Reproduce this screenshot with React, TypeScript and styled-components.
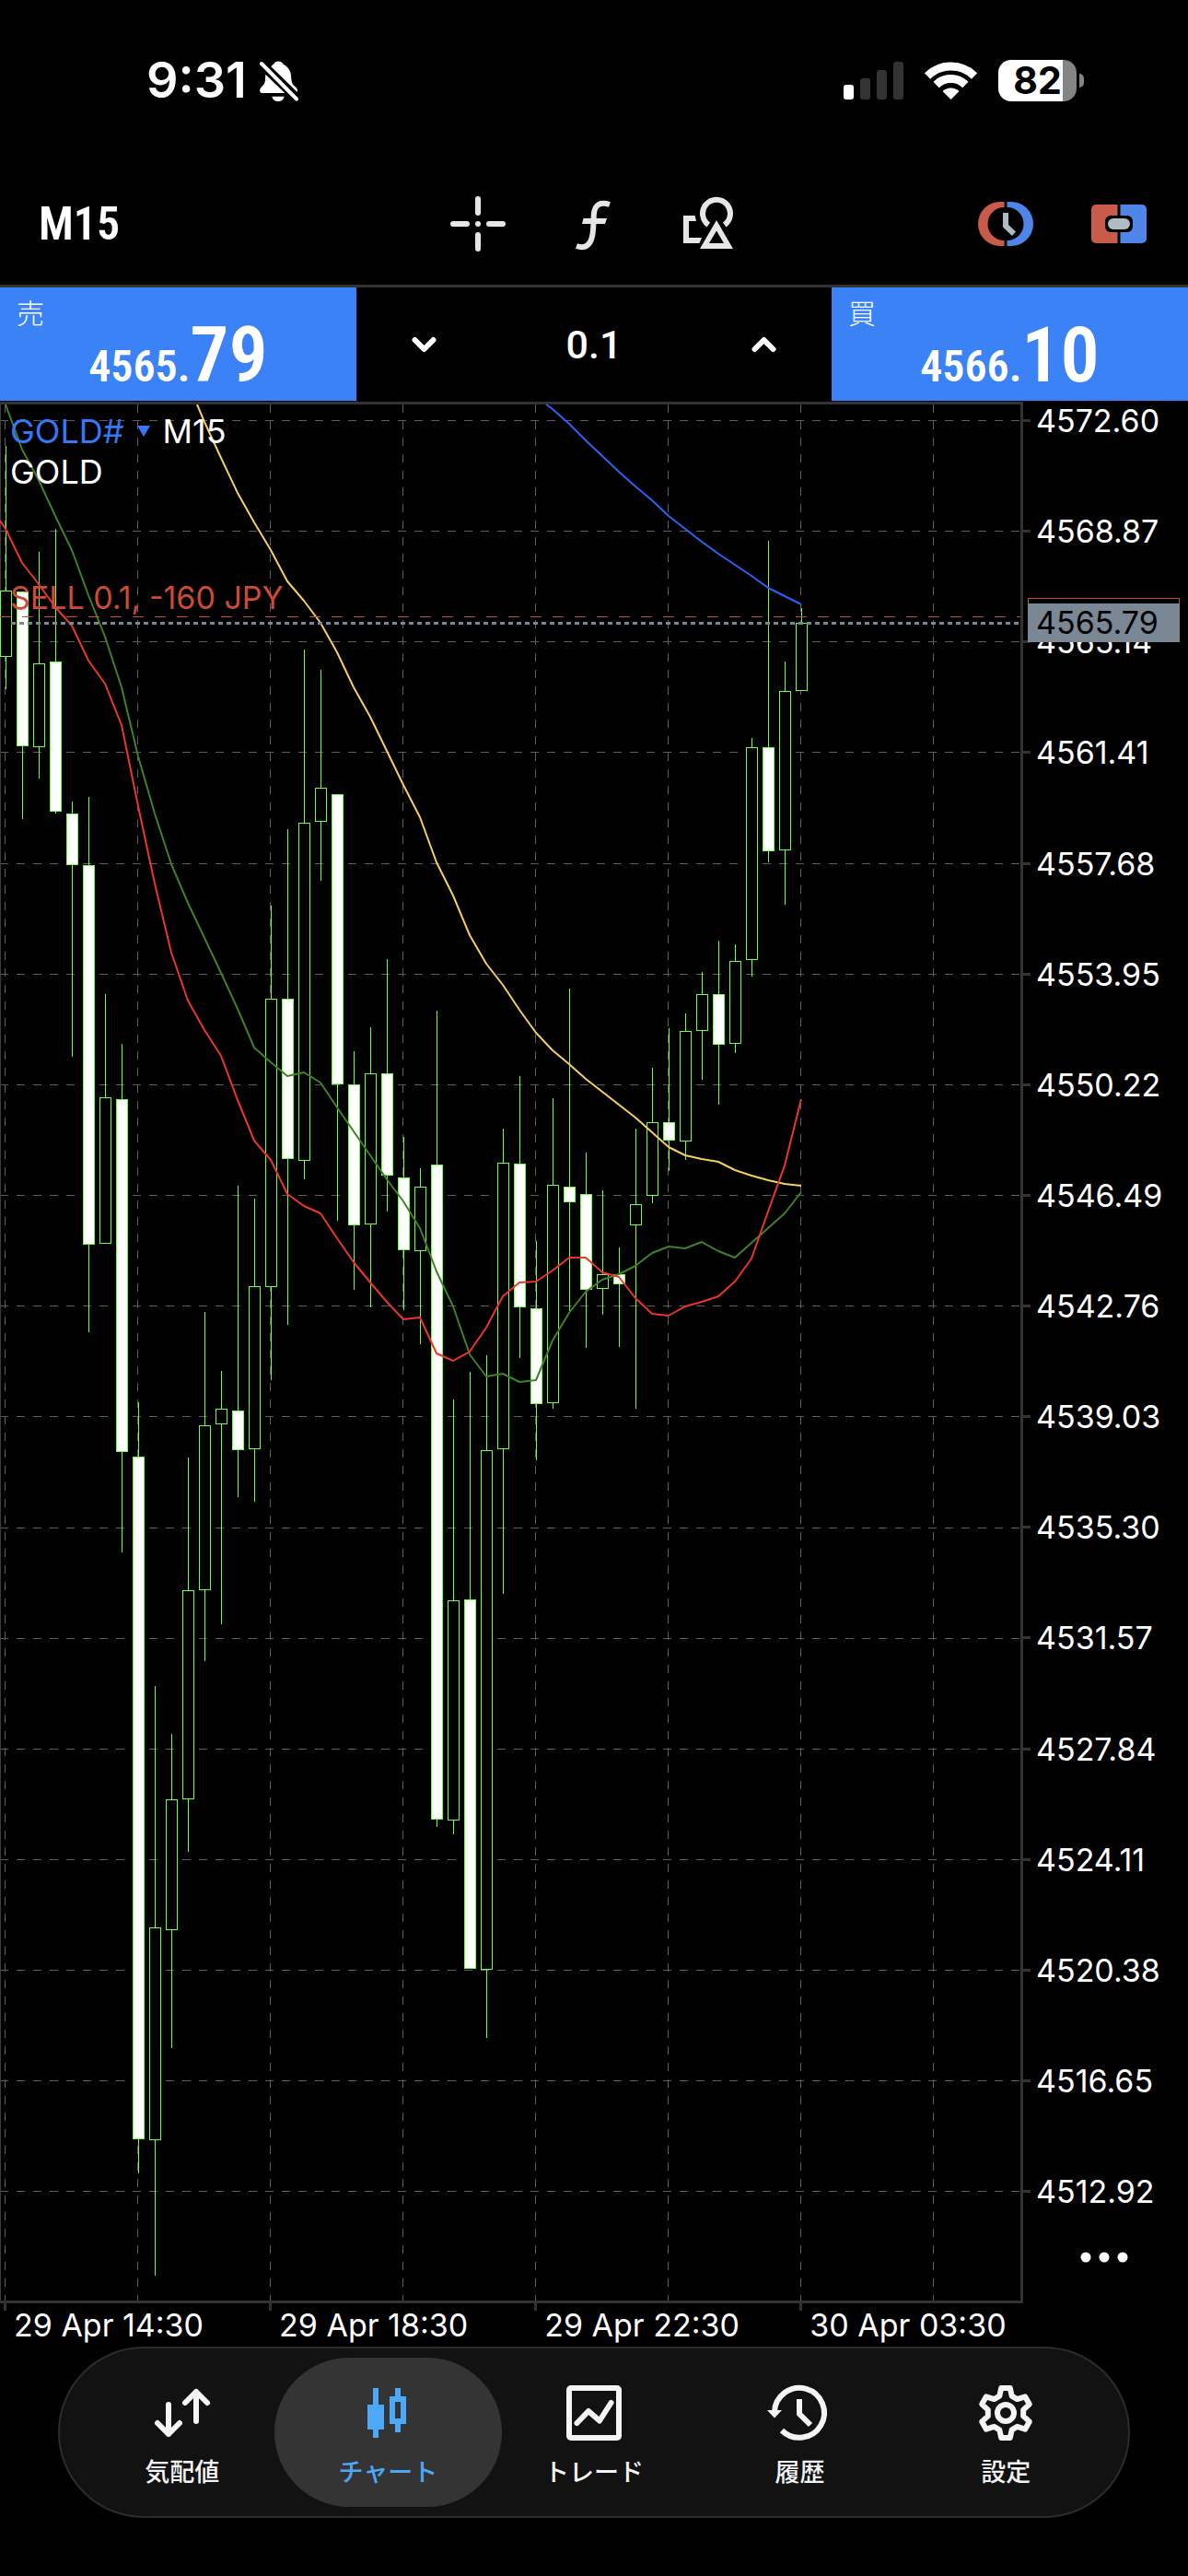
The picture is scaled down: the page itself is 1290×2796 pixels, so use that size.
import React from "react";
import styled, { createGlobalStyle } from "styled-components";

const SANS = `Inter, Roboto, "Noto Sans CJK JP", sans-serif`;
const NARROW = `"Roboto Condensed", "Liberation Sans Narrow", Roboto, "Noto Sans CJK JP", sans-serif`;

const GlobalStyle = createGlobalStyle`
  *, *::before, *::after { box-sizing: border-box; }
  body { margin: 0; background: #000; color: #fff; font-family: ${SANS}; }
  button, input { font: inherit; color: inherit; background: none; border: 0; padding: 0; margin: 0; }
  button { cursor: pointer; }
  svg { display: block; }
`;

const Screen = styled.div`
  display: flex;
  flex-direction: column;
  background: #000;
  padding-bottom: 63px;
`;

/* ---------- status bar ---------- */

const StatusBar = styled.div`
  display: flex;
  justify-content: space-between;
  align-items: center;
  height: 177px;
  padding: 0 113px 3px 159px;
`;

const StatusGroup = styled.div<{ $gap: number }>`
  display: flex;
  align-items: center;
  gap: ${(p) => p.$gap}px;
`;

const Clock = styled.time`
  font-size: 54px;
  line-height: 60px;
  font-weight: 600;
`;

const Battery = styled.div`
  display: flex;
  align-items: center;
  gap: 3px;
`;

const BatteryBody = styled.div<{ $level: number }>`
  width: 85px;
  height: 45px;
  border-radius: 14px;
  background: linear-gradient(90deg, #fff ${(p) => p.$level}%, #848484 ${(p) => p.$level}%);
  color: #000;
  font-size: 41px;
  line-height: 45px;
  font-weight: 700;
  text-align: center;
`;

const BatteryNub = styled.div`
  width: 5px;
  height: 15px;
  border-radius: 0 8px 8px 0;
  background: #848484;
`;

/* ---------- toolbar ---------- */

const Toolbar = styled.header`
  display: grid;
  grid-template-columns: 1fr auto 1fr;
  align-items: center;
  height: 135px;
  padding: 0 45px 0 42px;
  border-bottom: 3px solid #333;
`;

const ToolGroup = styled.div<{ $gap: number; $end?: boolean }>`
  display: flex;
  align-items: center;
  gap: ${(p) => p.$gap}px;
  justify-content: ${(p) => (p.$end ? "flex-end" : "center")};
`;

const Timeframe = styled.button`
  justify-self: start;
  font-family: ${NARROW};
  font-size: 50px;
  line-height: 60px;
  font-weight: 600;
`;

const IconButton = styled.button`
  display: flex;
  align-items: center;
  justify-content: center;
  color: #e6e6e6;
`;

/* ---------- one-click trading ---------- */

const TradePanel = styled.section`
  display: grid;
  grid-template-columns: 3fr 4fr 3fr;
  height: 124px;
  padding-bottom: 1px;
`;

const QuoteButton = styled.button`
  position: relative;
  display: flex;
  align-items: flex-end;
  justify-content: center;
  background: #3b82f7;
  font-family: ${NARROW};
  font-weight: 600;
`;

const QuoteSide = styled.span`
  position: absolute;
  top: 8px;
  left: 18px;
  font-family: "Noto Sans CJK JP", sans-serif;
  font-size: 30px;
  line-height: 36px;
  font-weight: 300;
`;

const Quote = styled.span`
  display: flex;
  align-items: baseline;
  font-size: 48px;
  line-height: 74px;
`;

const Pips = styled.span`
  font-size: 84px;
`;

const Volume = styled.div`
  display: flex;
  align-items: center;
  justify-content: space-between;
  padding: 0 60px;
`;

const VolumeInput = styled.input`
  width: 160px;
  font-family: Roboto, sans-serif;
  font-size: 43px;
  line-height: 60px;
  font-weight: 500;
  text-align: center;
`;

/* ---------- chart ---------- */

const Chart = styled.main`
  display: grid;
  grid-template-columns: minmax(0, 1fr) 182px;
`;

const Plot = styled.div`
  position: relative;
  border-top: 3px solid #333;
  border-bottom: 3px solid #333;
`;

const PlotSvg = styled.svg`
  width: 100%;
  height: auto;
`;

const Legend = styled.div`
  position: absolute;
  top: 7px;
  left: 11px;
  font-size: 36px;
  line-height: 44px;
`;

const LegendRow = styled.div`
  display: flex;
  align-items: center;
  gap: 14px;
`;

const SymbolButton = styled.button`
  display: flex;
  align-items: center;
  gap: 14px;
  color: #3478f6;
`;

const Position = styled.div`
  position: absolute;
  top: 190px;
  left: 11px;
  font-size: 34px;
  line-height: 40px;
  color: #cc4a38;
`;

const PriceAxis = styled.div`
  position: relative;
  display: flex;
  flex-direction: column;
  border-left: 3px solid #333;
`;

const PriceList = styled.ol`
  flex: 1;
  display: flex;
  flex-direction: column;
  justify-content: space-between;
  margin: 0;
  padding: 0;
  list-style: none;
`;

const PriceTick = styled.li`
  display: flex;
  align-items: center;
  gap: 6px;
  font-size: 34px;
  line-height: 41px;
  &::before {
    content: "";
    width: 8px;
    height: 3px;
    background: #333;
  }
`;

const PriceTag = styled.div<{ $top: number; $outline?: boolean }>`
  position: absolute;
  top: ${(p) => p.$top}px;
  left: 5px;
  width: 165px;
  height: 42px;
  padding-left: 9px;
  font-size: 34px;
  line-height: 42px;
  color: #000;
  background: ${(p) => (p.$outline ? "#000" : "#7a8896")};
  border: ${(p) => (p.$outline ? "1px solid #cc4a38" : "0")};
`;

const MoreButton = styled.button`
  display: flex;
  align-items: center;
  height: 101px;
  padding-left: 62px;
`;

const TimeAxis = styled.ol`
  grid-column: 1;
  display: grid;
  grid-template-columns: repeat(3, 26%) 1fr;
  margin: 0;
  padding: 0;
  list-style: none;
`;

const TimeTick = styled.li`
  display: flex;
  gap: 8px;
  padding-left: 4px;
  font-size: 34px;
  line-height: 47px;
  white-space: nowrap;
  &::before {
    content: "";
    width: 3px;
    height: 8px;
    background: #333;
  }
`;

/* ---------- tab bar ---------- */

const TabBar = styled.nav`
  display: flex;
  margin: 0 63px;
  padding: 10px 21px;
  border: 2px solid #2c2c2c;
  border-radius: 93px;
  background: #121212;
`;

const Tab = styled.a<{ $active?: boolean }>`
  flex: 1 0 0;
  display: flex;
  flex-direction: column;
  align-items: center;
  gap: 12px;
  height: 162px;
  margin: 0 -12px;
  padding-top: 30px;
  border-radius: 81px;
  text-decoration: none;
  font-family: "Noto Sans CJK JP", sans-serif;
  font-size: 27px;
  line-height: 42px;
  font-weight: 500;
  color: ${(p) => (p.$active ? "#4ea8f8" : "#f4f4f4")};
  background: ${(p) => (p.$active ? "#343434" : "transparent")};
`;

/* ---------- data ---------- */

const PRICES = [
  "4572.60", "4568.87", "4565.14", "4561.41", "4557.68", "4553.95", "4550.22", "4546.49", "4542.76",
  "4539.03", "4535.30", "4531.57", "4527.84", "4524.11", "4520.38", "4516.65", "4512.92",
];
const TIMES = ["29 Apr 14:30", "29 Apr 18:30", "29 Apr 22:30", "30 Apr 03:30"];

// Chart space: the plot's top edge is TOP, bars are STEP apart.
const TOP = 439;
const BOTTOM = 2497;
const WIDTH = 1108;
const STEP = 18;
const barX = (i: number) => 6.5 + STEP * i;

// high, body top, body bottom, low, falling
type Bar = [number, number, number, number, 0 | 1];
const BARS: Bar[] = [
  [484, 641, 712, 748, 0], [642, 642, 809, 889, 1], [599, 720, 810, 845, 0], [574, 718, 880, 883, 1],
  [870, 883, 938, 1147, 1], [865, 939, 1350, 1446, 1], [1079, 1191, 1349, 1349, 0], [1133, 1193, 1575, 1685, 1],
  [1522, 1581, 2321, 2359, 1], [1830, 2092, 2322, 2470, 0], [1882, 1953, 2094, 2223, 0], [1582, 1726, 1952, 2010, 0],
  [1424, 1547, 1725, 1803, 0], [1488, 1529, 1545, 1763, 0], [1287, 1531, 1573, 1625, 1], [1301, 1396, 1572, 1630, 0],
  [983, 1084, 1396, 1498, 0], [900, 1084, 1257, 1438, 1], [705, 893, 1259, 1280, 0], [727, 855, 891, 956, 0],
  [862, 862, 1176, 1325, 1], [1141, 1177, 1329, 1400, 1], [1115, 1165, 1328, 1419, 0], [1041, 1165, 1275, 1315, 1],
  [1234, 1278, 1356, 1422, 1], [1268, 1288, 1357, 1459, 0], [1097, 1264, 1974, 1983, 1], [1519, 1737, 1975, 1991, 0],
  [1489, 1736, 2136, 2136, 1], [1471, 1574, 2137, 2212, 0], [1225, 1262, 1572, 1730, 0], [1168, 1263, 1418, 1474, 1],
  [1347, 1420, 1523, 1585, 1], [1192, 1286, 1522, 1529, 0], [1073, 1288, 1304, 1423, 1], [1251, 1296, 1399, 1463, 1],
  [1292, 1383, 1398, 1427, 0], [1354, 1383, 1393, 1462, 1], [1225, 1307, 1329, 1529, 0], [1159, 1218, 1297, 1306, 0],
  [1116, 1218, 1237, 1271, 1], [1100, 1119, 1238, 1259, 0], [1055, 1079, 1118, 1172, 0], [1021, 1079, 1133, 1199, 1],
  [1025, 1043, 1132, 1143, 0], [801, 811, 1041, 1060, 0], [587, 811, 923, 936, 1], [718, 750, 922, 982, 0],
  [660, 676, 749, 749, 0],
];

interface Average {
  color: string;
  first: number;
  lead: string;
  ys: number[];
}
const AVERAGES: Average[] = [
  {
    color: "#2a62f5", first: 33, lead: "593,439",
    ys: [444, 460, 478, 495, 512, 528, 543, 560, 574, 588, 601, 613, 625, 638, 647, 656],
  },
  {
    color: "#f5cf5f", first: 12, lead: "214,439",
    ys: [458, 497, 535, 567, 597, 631, 652, 676, 708, 746, 778, 815, 852, 887, 936, 972, 1015, 1046, 1069, 1096,
      1121, 1140, 1155, 1171, 1185, 1199, 1213, 1229, 1245, 1254, 1258, 1261, 1270, 1276, 1281, 1285, 1287],
  },
  {
    color: "#3f8226", first: 0, lead: "5,439",
    ys: [439, 488, 521, 560, 597, 646, 691, 746, 821, 883, 938, 980, 1018, 1056, 1095, 1137, 1153, 1168, 1164, 1175,
      1202, 1228, 1254, 1280, 1304, 1333, 1380, 1418, 1470, 1494, 1491, 1500, 1498, 1455, 1425, 1402, 1389, 1383,
      1374, 1360, 1353, 1355, 1348, 1358, 1365, 1349, 1333, 1317, 1294],
  },
  {
    color: "#ea3728", first: 0, lead: "0,565",
    ys: [574, 611, 634, 659, 679, 717, 742, 787, 875, 959, 1034, 1086, 1118, 1146, 1194, 1238, 1259, 1296, 1309, 1317,
      1344, 1370, 1392, 1413, 1432, 1430, 1469, 1477, 1467, 1441, 1407, 1392, 1391, 1379, 1365, 1365, 1381, 1386,
      1409, 1426, 1428, 1418, 1413, 1407, 1391, 1366, 1315, 1265, 1193],
  },
];

/* ---------- drawings ---------- */

const BellOff = () => (
  <svg width="42" height="45" viewBox="0 0 42 45" fill="#fff" aria-hidden="true">
    <path d="M12.3 7.3C14 5 15.200 5 16 3.500C17 .8 23.500 .8 24.700 3.500C25.500 5 27.500 5.500 29.500 7.500C33 11 34 14 34.200 19C34.400 25 36 27 38 28.500C40.500 30.500 41.500 32 40.700 35Z" />
    <path d="M6.300 15.700L27.300 36H2.500C-.5 36-.5 32 1.500 30C4 27.500 5.700 26 6 21Z" />
    <path d="M13.300 39.700H26.700C26 43 23.500 45 20 45S14 43 13.300 39.700Z" />
    <path d="M2 4L40 42.500" stroke="#fff" strokeWidth="4" strokeLinecap="round" />
  </svg>
);

const Signal = () => (
  <svg width="65" height="41" viewBox="0 0 65 41" aria-hidden="true">
    <rect x="0" y="25" width="11" height="16" rx="3" fill="#fff" />
    <rect x="18" y="18" width="11" height="23" rx="3" fill="#333" />
    <rect x="36" y="9" width="11" height="32" rx="3" fill="#333" />
    <rect x="54" y="0" width="11" height="41" rx="3" fill="#333" />
  </svg>
);

const Wifi = () => (
  <svg width="57" height="42" viewBox="0 0 57 42" fill="none" stroke="#fff" strokeWidth="9" aria-hidden="true">
    <path d="M3 16.500A36.500 36.500 0 0 1 54 16.500" />
    <path d="M12.600 26A22.700 22.700 0 0 1 44.400 26" />
    <path d="M28.500 42L19.500 33A13 13 0 0 1 37.500 33Z" fill="#fff" stroke="none" />
  </svg>
);

const Crosshair = () => (
  <svg width="60" height="60" viewBox="0 0 60 60" stroke="currentColor" strokeWidth="6" strokeLinecap="round">
    <path d="M30 3V18M30 42V57M3 30H18M42 30H57M30 30V30" />
  </svg>
);

const FunctionIcon = () => (
  <svg width="60" height="60" viewBox="0 0 60 60" fill="none" stroke="currentColor" strokeWidth="6">
    <path d="M48 9C39 6 31.500 8 30.800 20C30.500 28 30.500 34 29.500 41C28 51 23 58 12 54" />
    <path d="M19.500 24H45L43 30H18Z" fill="currentColor" stroke="none" />
  </svg>
);

const ShapesIcon = () => (
  <svg width="60" height="60" viewBox="0 0 60 60" fill="currentColor">
    <path d="M3 21H15.600L17 27H9V45H23L20.500 51H3Z" />
    <path d="M30.300 31A15 15 0 1 1 47.700 31" fill="none" stroke="currentColor" strokeWidth="6" />
    <path fillRule="evenodd" d="M39 26L57 57H21ZM39 37.500L31 51H47Z" />
  </svg>
);

const SessionIcon = () => (
  <svg width="60" height="48" viewBox="0 0 60 48">
    <path d="M28.500 0H24A24 24 0 0 0 24 48H28.500V42A18 18 0 0 1 28.500 6Z" fill="#c95b4a" />
    <path d="M31.500 0H36A24 24 0 0 1 36 48H31.500V42A18 18 0 0 0 31.500 6Z" fill="#4d86e8" />
    <path d="M27 12H33V25L41 32.500L37 37L27 27.500Z" fill="#b0bcc4" />
  </svg>
);

const TicketIcon = () => (
  <svg width="60" height="42" viewBox="0 0 60 42">
    <path d="M28.500 0H5A5 5 0 0 0 0 5V37A5 5 0 0 0 5 42H28.500Z" fill="#c95b4a" />
    <path d="M31.500 0H55A5 5 0 0 1 60 5V37A5 5 0 0 1 55 42H31.500Z" fill="#4d86e8" />
    <rect x="15" y="12" width="30" height="18" rx="6" fill="#000" />
    <rect x="18" y="15" width="24" height="12" rx="6" fill="#b0bcc4" />
  </svg>
);

const Chevron = ({ up }: { up?: boolean }) => (
  <svg width="27" height="20" viewBox="0 0 27 20" fill="none" stroke="#fff" strokeWidth="6" strokeLinecap="round" strokeLinejoin="round">
    <path d={up ? "M3.500 15L13.500 5L23.500 15" : "M3.500 5L13.500 15L23.500 5"} />
  </svg>
);

const TabSvg = styled.svg.attrs({ width: 66, height: 60, viewBox: "0 0 66 60" })`
  overflow: visible;
  fill: none;
  stroke: currentColor;
  stroke-width: 6px;
`;

const QuotesIcon = () => (
  <TabSvg strokeLinecap="round" strokeLinejoin="round">
    <path d="M18 21V53M6 41L18 53L30 41M48 39V7M36 19L48 7L60 19" />
  </TabSvg>
);

const CandlesIcon = () => (
  <TabSvg>
    <path d="M20 3V57M44 3V12M44 42V51" />
    <path d="M14 24H26V45H14Z" fill="currentColor" />
    <path d="M38 15H50V39H38Z" />
  </TabSvg>
);

const TradeIcon = () => (
  <TabSvg strokeLinecap="round" strokeLinejoin="round">
    <rect x="6" y="3" width="54" height="54" rx="2" />
    <path d="M14.500 41L27 28L39 38.500L51.500 19" />
  </TabSvg>
);

const HistoryIcon = () => (
  <TabSvg>
    <path d="M5 29A27 27 0 1 1 13 49" />
    <path d="M-3 27H13L5 35.500Z" fill="currentColor" stroke="none" />
    <path d="M32 15V31L44 43" />
  </TabSvg>
);

const gearPath = (() => {
  const at = (r: number, deg: number) => {
    const a = ((deg - 90) * Math.PI) / 180;
    return `${(33 + r * Math.cos(a)).toFixed(1)} ${(30 + r * Math.sin(a)).toFixed(1)}`;
  };
  const points = [0, 60, 120, 180, 240, 300].flatMap((d) => [
    at(19.5, d - 20), at(27.5, d - 10), at(27.5, d + 10), at(19.5, d + 20),
  ]);
  return `M${points.join("L")}Z`;
})();

const SettingsIcon = () => (
  <TabSvg>
    <path d={gearPath} strokeLinejoin="round" />
    <circle cx="33" cy="30" r="9" />
  </TabSvg>
);

const PriceChart = () => (
  <PlotSvg viewBox={`0 ${TOP} ${WIDTH} ${BOTTOM - TOP}`} role="img" aria-label="GOLD M15">
    <g stroke="#5e5e5e" strokeDasharray="9 9" shapeRendering="crispEdges">
      {PRICES.map((p, i) => {
        const y = Math.round(456 + i * 120.15) + 0.5;
        return <line key={p} x1="0" x2={WIDTH} y1={y} y2={y} />;
      })}
      {Array.from({ length: 8 }, (_, i) => (
        <line key={i} x1={5.5 + 144 * i} x2={5.5 + 144 * i} y1={TOP} y2={BOTTOM} />
      ))}
    </g>
    <line x1="0.5" x2="0.5" y1={TOP} y2={BOTTOM} stroke="#3c3c3c" />
    <g stroke="#75fb4c" shapeRendering="crispEdges">
      {BARS.map(([high, top, bottom, low, falling], i) => (
        <g key={i}>
          <line x1={barX(i)} x2={barX(i)} y1={high} y2={low} />
          <rect x={barX(i) - 6} y={top + 0.5} width="12" height={bottom - top} fill={falling ? "#fff" : "#000"} />
        </g>
      ))}
    </g>
    <g fill="none" strokeWidth="2" strokeLinejoin="round">
      {AVERAGES.map(({ color, first, lead, ys }) => (
        <polyline key={color} stroke={color} points={`${lead} ${ys.map((y, i) => `${barX(first + i) - 0.5},${y}`).join(" ")}`} />
      ))}
    </g>
    <line x1="0" x2={WIDTH} y1="669.5" y2="669.5" stroke="#cc4a38" strokeDasharray="12 12" />
    <line x1="12" x2={WIDTH} y1="676.5" y2="676.5" stroke="#7a8896" strokeWidth="3" strokeDasharray="5 4" />
  </PlotSvg>
);

const TABS = [
  { label: "気配値", Icon: QuotesIcon },
  { label: "チャート", Icon: CandlesIcon, active: true },
  { label: "トレード", Icon: TradeIcon },
  { label: "履歴", Icon: HistoryIcon },
  { label: "設定", Icon: SettingsIcon },
];

export default function App() {
  return (
    <>
      <GlobalStyle />
      <Screen>
        <StatusBar>
          <StatusGroup $gap={14}>
            <Clock>9:31</Clock>
            <BellOff />
          </StatusGroup>
          <StatusGroup $gap={23}>
            <Signal />
            <Wifi />
            <Battery>
              <BatteryBody $level={82}>82</BatteryBody>
              <BatteryNub />
            </Battery>
          </StatusGroup>
        </StatusBar>

        <Toolbar>
          <Timeframe>M15</Timeframe>
          <ToolGroup $gap={65}>
            <IconButton aria-label="クロスヘア"><Crosshair /></IconButton>
            <IconButton aria-label="インディケータ"><FunctionIcon /></IconButton>
            <IconButton aria-label="オブジェクト"><ShapesIcon /></IconButton>
          </ToolGroup>
          <ToolGroup $gap={63} $end>
            <IconButton aria-label="取引セッション"><SessionIcon /></IconButton>
            <IconButton aria-label="ワンクリック取引"><TicketIcon /></IconButton>
          </ToolGroup>
        </Toolbar>

        <TradePanel>
          <QuoteButton>
            <QuoteSide>売</QuoteSide>
            <Quote>4565.<Pips>79</Pips></Quote>
          </QuoteButton>
          <Volume>
            <IconButton aria-label="減らす"><Chevron /></IconButton>
            <VolumeInput aria-label="ロット" defaultValue="0.1" inputMode="decimal" />
            <IconButton aria-label="増やす"><Chevron up /></IconButton>
          </Volume>
          <QuoteButton>
            <QuoteSide>買</QuoteSide>
            <Quote>4566.<Pips>10</Pips></Quote>
          </QuoteButton>
        </TradePanel>

        <Chart>
          <Plot>
            <PriceChart />
            <Legend>
              <LegendRow>
                <SymbolButton>
                  GOLD#
                  <svg width="14" height="14" viewBox="0 0 14 14" fill="currentColor"><path d="M0 1H14L7 13Z" /></svg>
                </SymbolButton>
                <span>M15</span>
              </LegendRow>
              <LegendRow>GOLD</LegendRow>
            </Legend>
            <Position>SELL 0.1, -160 JPY</Position>
          </Plot>
          <PriceAxis>
            <PriceList>
              {PRICES.map((p) => <PriceTick key={p}>{p}</PriceTick>)}
            </PriceList>
            <PriceTag $top={213} $outline />
            <PriceTag $top={219}>4565.79</PriceTag>
            <MoreButton aria-label="その他">
              <svg width="52" height="12" viewBox="0 0 52 12" fill="#fff">
                <circle cx="6" cy="6" r="5.500" />
                <circle cx="26" cy="6" r="5.500" />
                <circle cx="46" cy="6" r="5.500" />
              </svg>
            </MoreButton>
          </PriceAxis>
          <TimeAxis>
            {TIMES.map((t) => <TimeTick key={t}>{t}</TimeTick>)}
          </TimeAxis>
        </Chart>

        <TabBar>
          {TABS.map(({ label, Icon, active }) => (
            <Tab key={label} href="#" $active={active} aria-current={active ? "page" : undefined}>
              <Icon />
              {label}
            </Tab>
          ))}
        </TabBar>
      </Screen>
    </>
  );
}
